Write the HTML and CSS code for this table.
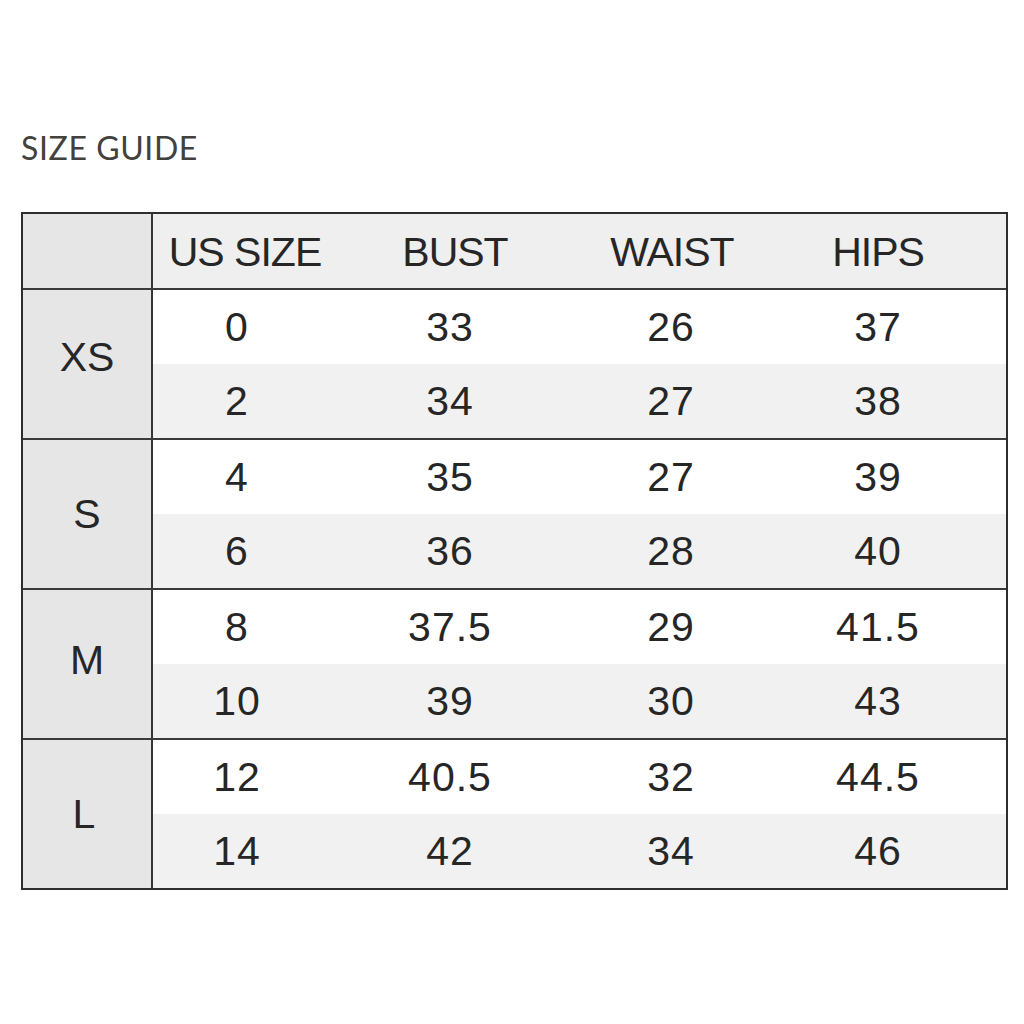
FILE: index.html
```html
<!DOCTYPE html>
<html>
<head>
<meta charset="utf-8">
<link rel="stylesheet" href="styles.css">
</head>
<body>
<div class="page">
  <h1 class="title">SIZE GUIDE</h1>
  <div class="chart">
    <div class="head">
      <div class="corner"></div>
      <div class="cells">
        <div class="c h1">US SIZE</div>
        <div class="c h2">BUST</div>
        <div class="c h3">WAIST</div>
        <div class="c h4">HIPS</div>
      </div>
    </div>
    <div class="group">
      <div class="label up-lg">XS</div>
      <div class="rows">
        <div class="cells"><div class="c">0</div><div class="c">33</div><div class="c">26</div><div class="c">37</div></div>
        <div class="cells alt"><div class="c">2</div><div class="c">34</div><div class="c">27</div><div class="c">38</div></div>
      </div>
    </div>
    <div class="group">
      <div class="label">S</div>
      <div class="rows">
        <div class="cells"><div class="c">4</div><div class="c">35</div><div class="c">27</div><div class="c">39</div></div>
        <div class="cells alt"><div class="c">6</div><div class="c">36</div><div class="c">28</div><div class="c">40</div></div>
      </div>
    </div>
    <div class="group">
      <div class="label up-sm">M</div>
      <div class="rows">
        <div class="cells"><div class="c">8</div><div class="c">37.5</div><div class="c">29</div><div class="c">41.5</div></div>
        <div class="cells alt"><div class="c">10</div><div class="c">39</div><div class="c">30</div><div class="c">43</div></div>
      </div>
    </div>
    <div class="group">
      <div class="label left">L</div>
      <div class="rows">
        <div class="cells"><div class="c">12</div><div class="c">40.5</div><div class="c">32</div><div class="c">44.5</div></div>
        <div class="cells alt"><div class="c">14</div><div class="c">42</div><div class="c">34</div><div class="c">46</div></div>
      </div>
    </div>
  </div>
</div>
</body>
</html>
```

FILE: styles.css
```css
html, body {
  margin: 0;
  padding: 0;
  background: #ffffff;
}
.page {
  padding: 128px 0 0 21px;
}
.title {
  margin: 0 0 44px 0;
  font-family: "Lato", "Open Sans", sans-serif;
  font-weight: 400;
  font-size: 32px;
  line-height: 40px;
  height: 40px;
  color: #43413c;
  letter-spacing: 0.6px;
}
.chart {
  width: 987px;
  box-sizing: border-box;
  border: 2px solid #2e2e2e;
  font-family: "Liberation Sans", Arial, sans-serif;
  font-size: 41px;
  color: #262626;
}
.head {
  display: flex;
  height: 74px;
  background: #efefef;
}
.corner {
  width: 130px;
  box-sizing: border-box;
  flex: none;
  background: #e6e6e6;
  border-right: 2px solid #363636;
}
.cells {
  flex: 1;
  display: grid;
  grid-template-columns: 168px 258px 184px 230px 1fr;
  align-items: center;
  height: 74px;
  background: #ffffff;
}
.head .cells {
  background: #efefef;
}
.cells.alt {
  background: #f1f1f1;
}
.c {
  text-align: center;
  line-height: 74px;
  letter-spacing: 1px;
  white-space: nowrap;
}
.head .c {
  letter-spacing: -1px;
  line-height: 76px;
}
.h1 { padding-left: 8px; margin-right: -8px; }
.h2 { padding-left: 10px; }
.h3 { padding-left: 2px; }
.group {
  display: flex;
  border-top: 2px solid #3a3a3a;
  height: 148px;
}
.label {
  width: 130px;
  flex: none;
  box-sizing: border-box;
  background: #e6e6e6;
  border-right: 2px solid #363636;
  display: flex;
  align-items: center;
  justify-content: center;
}
.label.up-lg { padding-bottom: 14px; }
.label.up-sm { padding-bottom: 8px; }
.label.left { padding-right: 6px; }
.rows {
  flex: 1;
  display: flex;
  flex-direction: column;
}
.rows .cells {
  flex: none;
}
```
